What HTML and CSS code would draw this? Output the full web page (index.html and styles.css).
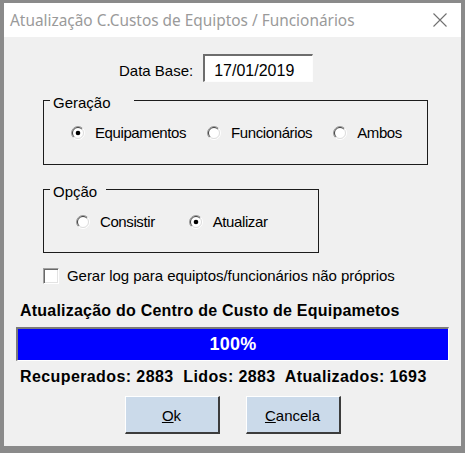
FILE: index.html
```html
<!DOCTYPE html>
<html lang="pt">
<head>
<meta charset="utf-8">
<title>Atualização C.Custos de Equiptos / Funcionários</title>
<link rel="stylesheet" href="styles.css">
</head>
<body>
<div class="window">
  <div class="titlebar">
    <span class="title">Atualização C.Custos de Equiptos / Funcionários</span>
    <svg class="close" viewBox="0 0 14 14" width="14" height="14"><path d="M0.5 0.5 L13.5 13.5 M13.5 0.5 L0.5 13.5" stroke="#707070" stroke-width="1.1" fill="none"/></svg>
  </div>
  <div class="content">
    <div class="date-row">
      <span class="lbl">Data Base:</span>
      <div class="edit">17/01/2019</div>
    </div>

    <div class="group g1">
      <div class="legend">Geração</div>
      <div class="radios">
        <div class="radio">
          <svg class="rb" viewBox="0 0 14 14" width="14" height="14"><circle cx="7" cy="7" r="6" fill="#fff"/><path d="M2.4 11.6 A6.5 6.5 0 0 1 11.6 2.4" stroke="#9a9a9a" fill="none"/><path d="M3.1 10.9 A5.5 5.5 0 0 1 10.9 3.1" stroke="#404040" fill="none"/><path d="M11.6 2.4 A6.5 6.5 0 0 1 2.4 11.6" stroke="#ffffff" fill="none"/><path d="M10.9 3.1 A5.5 5.5 0 0 1 3.1 10.9" stroke="#dcdcdc" fill="none"/><circle cx="7" cy="7" r="2.3" fill="#000"/></svg>
          <span>Equipamentos</span>
        </div>
        <div class="radio">
          <svg class="rb" viewBox="0 0 14 14" width="14" height="14"><circle cx="7" cy="7" r="6" fill="#fff"/><path d="M2.4 11.6 A6.5 6.5 0 0 1 11.6 2.4" stroke="#9a9a9a" fill="none"/><path d="M3.1 10.9 A5.5 5.5 0 0 1 10.9 3.1" stroke="#404040" fill="none"/><path d="M11.6 2.4 A6.5 6.5 0 0 1 2.4 11.6" stroke="#ffffff" fill="none"/><path d="M10.9 3.1 A5.5 5.5 0 0 1 3.1 10.9" stroke="#dcdcdc" fill="none"/></svg>
          <span>Funcionários</span>
        </div>
        <div class="radio">
          <svg class="rb" viewBox="0 0 14 14" width="14" height="14"><circle cx="7" cy="7" r="6" fill="#fff"/><path d="M2.4 11.6 A6.5 6.5 0 0 1 11.6 2.4" stroke="#9a9a9a" fill="none"/><path d="M3.1 10.9 A5.5 5.5 0 0 1 10.9 3.1" stroke="#404040" fill="none"/><path d="M11.6 2.4 A6.5 6.5 0 0 1 2.4 11.6" stroke="#ffffff" fill="none"/><path d="M10.9 3.1 A5.5 5.5 0 0 1 3.1 10.9" stroke="#dcdcdc" fill="none"/></svg>
          <span>Ambos</span>
        </div>
      </div>
    </div>

    <div class="group g2">
      <div class="legend">Opção</div>
      <div class="radios">
        <div class="radio">
          <svg class="rb" viewBox="0 0 14 14" width="14" height="14"><circle cx="7" cy="7" r="6" fill="#fff"/><path d="M2.4 11.6 A6.5 6.5 0 0 1 11.6 2.4" stroke="#9a9a9a" fill="none"/><path d="M3.1 10.9 A5.5 5.5 0 0 1 10.9 3.1" stroke="#404040" fill="none"/><path d="M11.6 2.4 A6.5 6.5 0 0 1 2.4 11.6" stroke="#ffffff" fill="none"/><path d="M10.9 3.1 A5.5 5.5 0 0 1 3.1 10.9" stroke="#dcdcdc" fill="none"/></svg>
          <span>Consistir</span>
        </div>
        <div class="radio">
          <svg class="rb" viewBox="0 0 14 14" width="14" height="14"><circle cx="7" cy="7" r="6" fill="#fff"/><path d="M2.4 11.6 A6.5 6.5 0 0 1 11.6 2.4" stroke="#9a9a9a" fill="none"/><path d="M3.1 10.9 A5.5 5.5 0 0 1 10.9 3.1" stroke="#404040" fill="none"/><path d="M11.6 2.4 A6.5 6.5 0 0 1 2.4 11.6" stroke="#ffffff" fill="none"/><path d="M10.9 3.1 A5.5 5.5 0 0 1 3.1 10.9" stroke="#dcdcdc" fill="none"/><circle cx="7" cy="7" r="2.3" fill="#000"/></svg>
          <span>Atualizar</span>
        </div>
      </div>
    </div>

    <div class="check-row">
      <div class="check"></div>
      <span>Gerar log para equiptos/funcionários não próprios</span>
    </div>

    <div class="section-title">Atualização do Centro de Custo de Equipametos</div>
    <div class="progress"><span>100%</span></div>
    <div class="stats">Recuperados: 2883  Lidos: 2883  Atualizados: 1693</div>

    <div class="buttons">
      <div class="btn"><span><u>O</u>k</span></div>
      <div class="btn"><span><u>C</u>ancela</span></div>
    </div>
  </div>
</div>
</body>
</html>
```

FILE: styles.css
```css
body {
  margin: 0;
  font-family: "Liberation Sans", Arial, sans-serif;
  color: #000;
}

.window {
  width: 465px;
  height: 453px;
  box-sizing: border-box;
  border-style: solid;
  border-color: #8a8a8a;
  border-width: 3px 4px 7px 4px;
  background: #f0f0f0;
}

.titlebar {
  height: 34px;
  background: #fff;
  display: flex;
  align-items: center;
  justify-content: space-between;
  padding: 0 14px 0 6px;
}

.title {
  font-family: "Noto Sans", "Open Sans", sans-serif;
  font-size: 15.4px;
  color: #9a9a9a;
  white-space: nowrap;
}

.close {
  display: block;
}

.content {
  padding: 0 12px;
}

.date-row {
  display: flex;
  align-items: baseline;
  margin: 17px 0 0 103px;
}

.lbl {
  font-size: 15px;
  line-height: 17px;
  margin-right: 10px;
}

.edit {
  box-sizing: border-box;
  width: 110px;
  height: 28px;
  background: #fff;
  border-style: solid;
  border-width: 2px 1px 1px 2px;
  border-color: #6d6d6d #fdfdfd #fdfdfd #6d6d6d;
  padding: 6px 0 0 9px;
  font-size: 16px;
  line-height: 18px;
}

.group {
  box-sizing: border-box;
  border: 1px solid #1c1c1c;
  margin-left: 27px;
}

.g1 {
  width: 385px;
  height: 65px;
  margin-top: 18px;
}

.g2 {
  width: 276px;
  height: 64px;
  margin-top: 24px;
}

.legend {
  width: fit-content;
  margin: -7px 0 0 6px;
  padding: 0 3px;
  background: #f0f0f0;
  font-size: 15px;
  line-height: 17px;
}

.g1 .legend {
  padding-right: 23px;
}

.g2 .legend {
  padding-right: 9px;
}

.radios {
  display: flex;
  align-items: center;
  margin-top: 13px;
}

.g1 .radios {
  padding-left: 27px;
  gap: 21px;
}

.g2 .radios {
  padding-left: 32px;
  gap: 34px;
}

.radio {
  display: flex;
  align-items: center;
  gap: 10px;
  font-size: 15px;
  line-height: 17px;
  letter-spacing: -0.4px;
}

.rb {
  display: block;
  flex: none;
}

.check-row {
  display: flex;
  align-items: center;
  gap: 8px;
  margin: 14px 0 0 27px;
  font-size: 15px;
  line-height: 17px;
  letter-spacing: -0.05px;
}

.check {
  box-sizing: border-box;
  width: 16px;
  height: 16px;
  background: #fff;
  border-style: solid;
  border-width: 1px;
  border-color: #a0a0a0 #fff #fff #a0a0a0;
  box-shadow: inset 1px 1px 0 #696969, inset -1px -1px 0 #e3e3e3;
}

.section-title {
  font-weight: bold;
  font-size: 16px;
  line-height: 18px;
  margin: 18px 0 0 4px;
  letter-spacing: 0.22px;
}

.progress {
  box-sizing: border-box;
  width: 433px;
  height: 34px;
  margin-top: 7px;
  background: #0000ff;
  border-style: solid;
  border-width: 2px 1px 1px 2px;
  border-color: #7a7a7a #fff #fff #7a7a7a;
  display: flex;
  align-items: center;
  justify-content: center;
  color: #fff;
  font-weight: bold;
  font-size: 18px;
  letter-spacing: 0.3px;
}

.stats {
  font-weight: bold;
  font-size: 16px;
  line-height: 18px;
  margin: 7px 0 0 4px;
  white-space: pre;
  letter-spacing: 0.4px;
}

.buttons {
  display: flex;
  justify-content: center;
  gap: 26px;
  margin-top: 10px;
}

.btn {
  box-sizing: border-box;
  width: 95px;
  height: 38px;
  background: #cbdaea;
  border-style: solid;
  border-width: 1px 2px 2px 1px;
  border-color: #fff #3c3c3c #3c3c3c #fff;
  display: flex;
  align-items: center;
  justify-content: center;
  font-size: 15px;
  padding-top: 2px;
}

.btn u {
  text-decoration: underline;
}
```
